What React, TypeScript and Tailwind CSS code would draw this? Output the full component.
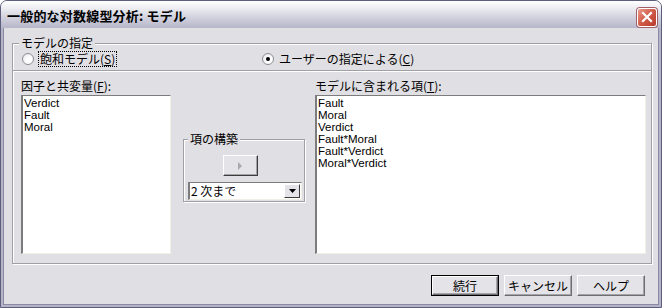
import React from "react";

const jp = "font-['Noto_Sans_CJK_JP','Liberation_Sans',sans-serif]";
const latin = "font-['Liberation_Sans','Noto_Sans_CJK_JP',sans-serif]";

const Radio = ({ checked }: { checked?: boolean }) => (
    <span className="w-[12px] h-[12px] rounded-full border border-[#8c8c94] bg-[radial-gradient(circle_at_65%_65%,#ffffff_30%,#e4e4e8_100%)] flex items-center justify-center shrink-0">
        {checked && <span className="w-[4px] h-[4px] rounded-full bg-black" />}
    </span>
);

const Sunken = ({ className, children }: { className: string; children?: React.ReactNode }) => (
    <div
        className={`bg-white border-t border-l-2 border-r border-b border-t-[#7c7c7c] border-l-[#7c7c7c] border-r-[#f1efe6] border-b-[#f1efe6] ${className}`}
    >
        {children}
    </div>
);

const Btn = ({ label, isDefault }: { label: string; isDefault?: boolean }) => (
    <div
        className={`w-[68px] h-[21px] flex items-center justify-center ${isDefault ? "border border-black" : ""}`}
    >
        <div className="w-full h-full flex items-center justify-center bg-[#e4e3e7] border border-t-white border-l-white border-r-[#6e6e72] border-b-[#6e6e72] shadow-[inset_-1px_-1px_0_#a4a3a8] text-[12px] leading-[14px] text-black">
            {label}
        </div>
    </div>
);

const App = () => {
    const leftItems = ["Verdict", "Fault", "Moral"];
    const rightItems = ["Fault", "Moral", "Verdict", "Fault*Moral", "Fault*Verdict", "Moral*Verdict"];

    return (
        <div className={`w-[662px] h-[308px] flex flex-col bg-[#e0dfe3] border border-[#5d5d7d] rounded-t-[7px] overflow-hidden ${jp} text-black`}>
            {/* title bar */}
            <div className="h-[27px] shrink-0 flex items-center justify-between pl-[6px] pr-[4px] bg-[linear-gradient(#ffffff_0%,#eeeef3_25%,#d2d2de_60%,#b6b6ca_100%)]">
                <p className="text-[13px] font-bold leading-[15px] tracking-[0.2px] pt-[2px]">一般的な対数線型分析: モデル</p>
                <div className="w-[20px] h-[19px] mt-[5px] rounded-[3px] border border-white bg-[linear-gradient(135deg,#ec9a8c_0%,#d05a48_50%,#b83a2c_100%)] flex items-center justify-center shadow-[0_0_0_1px_#a0606a]">
                    <svg width="12" height="12" viewBox="0 0 12 12">
                        <path d="M2 2 L10 10 M10 2 L2 10" stroke="white" strokeWidth="2.2" strokeLinecap="square" />
                    </svg>
                </div>
            </div>

            {/* body */}
            <div className="flex-1 flex flex-col border-x-[2px] border-b-[2px] border-[#b4b4c6] shadow-[inset_1px_0_0_#8a8aa6,inset_-1px_0_0_#8a8aa6,inset_0_-1px_0_#8a8aa6]">
                {/* model spec group */}
                <div className="relative ml-[9px] mt-[15px] w-[640px] h-[221px] border border-[#a09fa6] shadow-[inset_1px_1px_0_#ffffff,1px_1px_0_#ffffff] flex flex-col">
                    <span className="absolute -top-[8px] left-[6px] px-[2px] bg-[#e0dfe3] text-[12px] leading-[14px]">
                        モデルの指定
                    </span>

                    <div className="mt-[6px] h-[18px] flex items-center pl-[9px] text-[12px] leading-[14px]">
                        <div className="w-[240px] flex items-center gap-[4px]">
                            <Radio />
                            <span className="px-[1px] border border-dotted border-black">
                                飽和モデル(<span className="underline">S</span>)
                            </span>
                        </div>
                        <div className="flex items-center gap-[4px]">
                            <Radio checked />
                            <span className="px-[1px]">
                                ユーザーの指定による(<span className="underline">C</span>)
                            </span>
                        </div>
                    </div>

                    <div className="mt-[2px] border-t border-t-[#a09fa6] border-b border-b-white" />

                    <div className="flex pl-[8px] mt-[5px]">
                        {/* left list */}
                        <div className="w-[150px] flex flex-col">
                            <p className="h-[18px] text-[12px] leading-[14px] pt-[2px]">
                                因子と共変量(<span className="underline">F</span>):
                            </p>
                            <Sunken className="h-[159px] pt-[1px] pl-[1px]">
                                {leftItems.map((it) => (
                                    <p key={it} className={`${latin} text-[11.5px] leading-[12px] h-[12px]`}>
                                        {it}
                                    </p>
                                ))}
                            </Sunken>
                        </div>

                        {/* build term group */}
                        <div className="ml-[12px] w-[122px] mt-[62px]">
                            <div className="relative h-[63px] border border-[#a09fa6] shadow-[inset_1px_1px_0_#ffffff,1px_1px_0_#ffffff] flex flex-col">
                                <span className="absolute -top-[8px] left-[4px] px-[2px] bg-[#e0dfe3] text-[12px] leading-[14px]">
                                    項の構築
                                </span>
                                <div className="ml-[39px] mt-[15px] w-[35px] h-[21px] bg-[#e4e3e7] border border-t-white border-l-white border-r-[#3c3c3c] border-b-[#3c3c3c] shadow-[inset_-1px_-1px_0_#a4a3a8] flex items-center justify-center">
                                    <svg width="5" height="8" viewBox="0 0 5 8">
                                        <path d="M0 0 L4 4 L0 8 Z" fill="#a8a8ae" />
                                    </svg>
                                </div>
                                <Sunken className="ml-[4px] mt-[6px] w-[114px] h-[18px] flex items-center justify-between">
                                    <span className="text-[12px] leading-[14px] pl-[1px]">2 次まで</span>
                                    <span className="w-[16px] h-[14px] mr-[1px] bg-[#e4e3e7] border border-t-white border-l-white border-r-[#3c3c3c] border-b-[#3c3c3c] flex items-center justify-center">
                                        <svg width="7" height="4" viewBox="0 0 7 4">
                                            <path d="M0 0 L7 0 L3.5 4 Z" fill="black" />
                                        </svg>
                                    </span>
                                </Sunken>
                            </div>
                        </div>

                        {/* right list */}
                        <div className="ml-[10px] w-[331px] flex flex-col">
                            <p className="h-[18px] text-[12px] leading-[14px] pt-[2px]">
                                モデルに含まれる項(<span className="underline">T</span>):
                            </p>
                            <Sunken className="h-[159px] pt-[1px] pl-[1px]">
                                {rightItems.map((it) => (
                                    <p key={it} className={`${latin} text-[11.5px] leading-[12px] h-[12px]`}>
                                        {it}
                                    </p>
                                ))}
                            </Sunken>
                        </div>
                    </div>
                </div>

                {/* buttons */}
                <div className="flex justify-end gap-[5px] mt-[11px] pr-[14px]">
                    <Btn label="続行" isDefault />
                    <Btn label="キャンセル" />
                    <Btn label="ヘルプ" />
                </div>
            </div>
        </div>
    );
};

export default App;
